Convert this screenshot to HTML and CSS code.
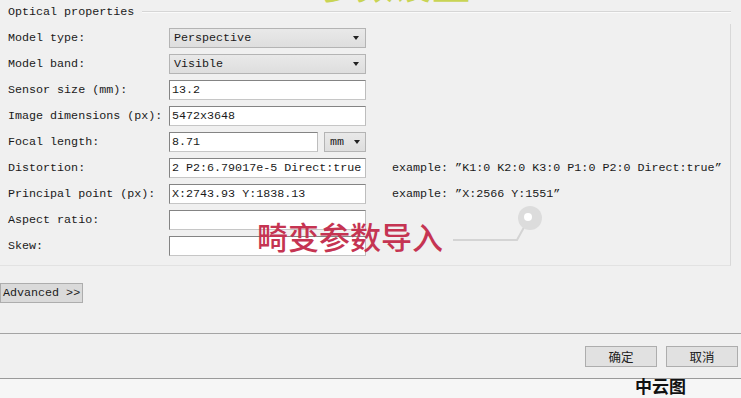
FILE: index.html
```html
<!DOCTYPE html>
<html>
<head>
<meta charset="utf-8">
<link rel="stylesheet" href="styles.css">
</head>
<body>
<div class="window">
  <section class="group">
    <div class="group-head">
      <span class="group-title">Optical properties</span>
      <span class="group-rule"></span>
    </div>
    <div class="form">
      <span class="label">Model type:</span>
      <div class="combo"><span>Perspective</span><span class="arrow"></span></div>
      <span></span>

      <span class="label">Model band:</span>
      <div class="combo"><span>Visible</span><span class="arrow"></span></div>
      <span></span>

      <span class="label">Sensor size (mm):</span>
      <div class="field">13.2</div>
      <span></span>

      <span class="label">Image dimensions (px):</span>
      <div class="field">5472x3648</div>
      <span></span>

      <span class="label">Focal length:</span>
      <div class="split">
        <div class="field grow">8.71</div>
        <div class="combo unit"><span>mm</span><span class="arrow"></span></div>
      </div>
      <span></span>

      <span class="label">Distortion:</span>
      <div class="field">2 P2:6.79017e-5 Direct:true</div>
      <span class="example">example: ”K1:0 K2:0 K3:0 P1:0 P2:0 Direct:true”</span>

      <span class="label">Principal point (px):</span>
      <div class="field">X:2743.93 Y:1838.13</div>
      <span class="example">example: ”X:2566 Y:1551”</span>

      <span class="label">Aspect ratio:</span>
      <div class="field"></div>
      <span></span>

      <span class="label">Skew:</span>
      <div class="field"></div>
      <span></span>
    </div>
  </section>

  <div class="adv-row">
    <div class="btn adv">Advanced &gt;&gt;</div>
  </div>

  <div class="footer">
    <div class="btn cjk">确定</div>
    <div class="btn cjk">取消</div>
  </div>

  <div class="bottom">
    <span class="brand">中云图</span>
  </div>

  <div class="wm-top">参数设置</div>
  <div class="callout-text">畸变参数导入</div>
  <svg class="callout" width="110" height="50" viewBox="0 0 110 50">
    <path d="M13 40 H77 L88 20" fill="none" stroke="#d4d4d4" stroke-width="2"/>
    <circle cx="90" cy="18" r="12" fill="#dcdcdc"/>
    <circle cx="88" cy="17" r="4" fill="#ffffff"/>
  </svg>
</div>
</body>
</html>
```

FILE: styles.css
```css
* { box-sizing: border-box; }
html, body { margin: 0; padding: 0; }
body {
  background: #f0f0f0;
  font-family: "Liberation Mono", "Noto Sans CJK SC", monospace;
  font-size: 11.7px;
  color: #1a1a1a;
}
.window {
  position: relative;
  width: 741px;
  height: 398px;
  overflow: hidden;
  background: #f0f0f0;
}
.group {
  width: 731px;
}
.group-head {
  display: flex;
  align-items: center;
  height: 24px;
  padding-left: 8px;
}
.group-title {
  line-height: 24px;
  white-space: nowrap;
}
.group-rule {
  flex: 1;
  margin-left: 8px;
  height: 2px;
  border-top: 1px solid #d6d6d6;
  border-bottom: 1px solid #fafafa;
}
.form {
  display: grid;
  grid-template-columns: 161px 197px 1fr;
  grid-auto-rows: 20px;
  row-gap: 6px;
  padding: 4px 0 9px 8px;
  border-right: 1px solid #d8d8d8;
  border-bottom: 1px solid #e2e2e2;
}
.label {
  display: flex;
  align-items: center;
  white-space: nowrap;
}
.combo {
  display: flex;
  align-items: center;
  justify-content: space-between;
  height: 20px;
  padding: 0 6px 0 4px;
  border: 1px solid #b4b4b4;
  background: linear-gradient(#e9e9e9, #dedede);
}
.arrow {
  width: 0;
  height: 0;
  border-left: 3.5px solid transparent;
  border-right: 3.5px solid transparent;
  border-top: 4px solid #222;
}
.field {
  display: flex;
  align-items: center;
  height: 20px;
  padding-left: 2px;
  border: 1px solid #848484;
  border-right-color: #bdbdbd;
  border-bottom-color: #c6c6c6;
  background: #ffffff;
  white-space: nowrap;
  overflow: hidden;
}
.split {
  display: flex;
  gap: 6px;
}
.grow { flex: 1; }
.unit {
  width: 42px;
  padding: 0 5px 0 5px;
  flex: none;
}
.example {
  display: flex;
  align-items: center;
  margin-left: 26px;
  white-space: nowrap;
}
.adv-row {
  padding-top: 17px;
  height: 67px;
}
.btn {
  display: flex;
  align-items: center;
  justify-content: center;
  height: 20px;
  border: 1px solid #adadad;
  background: #dfdfdf;
  white-space: nowrap;
}
.adv {
  width: 83px;
  justify-content: flex-start;
  padding-left: 2px;
  background: #dadada;
}
.footer {
  display: flex;
  justify-content: flex-end;
  gap: 9px;
  height: 45px;
  padding: 12px 3px 0 0;
  border-top: 1px solid #a4a4a4;
}
.cjk {
  width: 72px;
  height: 21px;
  font-family: "Noto Sans CJK SC", sans-serif;
  font-size: 12.5px;
  color: #222;
  background: #e1e1e1;
}
.bottom {
  display: flex;
  align-items: flex-start;
  height: 20px;
  border-top: 1px solid #9a9a9a;
  background: #f6f6f6;
  padding-left: 635px;
}
.brand {
  font-family: "Noto Sans CJK SC", sans-serif;
  font-weight: 700;
  font-size: 17px;
  line-height: 16px;
  margin-top: -1px;
  color: #111;
}
.wm-top {
  position: absolute;
  left: 318px;
  top: -37px;
  font-family: "Noto Sans CJK SC", sans-serif;
  font-weight: 900;
  font-size: 38px;
  line-height: 38px;
  color: #c9d454;
}
.callout-text {
  position: absolute;
  left: 257px;
  top: 220px;
  font-family: "Noto Sans CJK SC", sans-serif;
  font-weight: 500;
  font-size: 31px;
  line-height: 31px;
  color: #c53452;
}
.callout {
  position: absolute;
  left: 440px;
  top: 200px;
}
```
